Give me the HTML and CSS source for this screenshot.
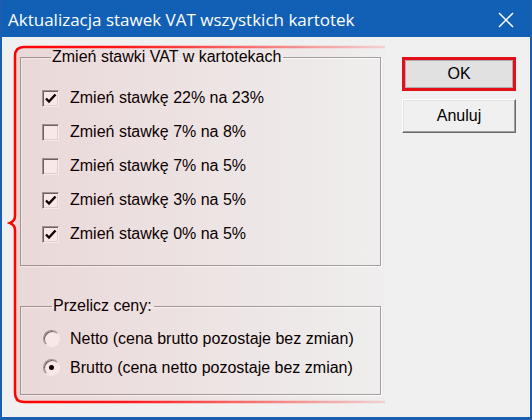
FILE: index.html
```html
<!DOCTYPE html>
<html>
<head>
<meta charset="utf-8">
<link rel="stylesheet" href="styles.css">
</head>
<body>
<div class="window">
  <div class="titlebar">
    <span class="title">Aktualizacja stawek VAT wszystkich kartotek</span>
    <svg class="close" width="16" height="16" viewBox="0 0 16 16"><path d="M1 1 L15 15 M15 1 L1 15" stroke="#fff" stroke-width="1.5" fill="none"/></svg>
  </div>
  <div class="content">
    <div class="left">
      <fieldset class="group g1">
        <legend>Zmień stawki VAT w kartotekach</legend>
        <div class="row"><span class="check on"><svg viewBox="0 0 15 15" width="15" height="15"><path d="M3 7.5 L6 10.5 L12.5 3.5" stroke="#000" stroke-width="2.4" fill="none"/></svg></span><span>Zmień stawkę 22% na 23%</span></div>
        <div class="row"><span class="check"></span><span>Zmień stawkę 7% na 8%</span></div>
        <div class="row"><span class="check"></span><span>Zmień stawkę 7% na 5%</span></div>
        <div class="row"><span class="check on"><svg viewBox="0 0 15 15" width="15" height="15"><path d="M3 7.5 L6 10.5 L12.5 3.5" stroke="#000" stroke-width="2.4" fill="none"/></svg></span><span>Zmień stawkę 3% na 5%</span></div>
        <div class="row"><span class="check on"><svg viewBox="0 0 15 15" width="15" height="15"><path d="M3 7.5 L6 10.5 L12.5 3.5" stroke="#000" stroke-width="2.4" fill="none"/></svg></span><span>Zmień stawkę 0% na 5%</span></div>
      </fieldset>
      <fieldset class="group g2">
        <legend>Przelicz ceny:</legend>
        <div class="rrow"><span class="radio"></span><span>Netto (cena brutto pozostaje bez zmian)</span></div>
        <div class="rrow"><span class="radio on"></span><span>Brutto (cena netto pozostaje bez zmian)</span></div>
      </fieldset>
    </div>
    <div class="right">
      <div class="btn ok"><span>OK</span></div>
      <div class="btn cancel"><span>Anuluj</span></div>
    </div>
  </div>
  <svg class="annot" width="532" height="420" viewBox="0 0 532 420">
    <defs>
      <linearGradient id="fade" gradientUnits="userSpaceOnUse" x1="10" y1="0" x2="385" y2="0">
        <stop offset="0" stop-color="#ff0000" stop-opacity="1"/>
        <stop offset="0.3" stop-color="#ff0000" stop-opacity="0.9"/>
        <stop offset="1" stop-color="#ff0000" stop-opacity="0.12"/>
      </linearGradient>
      <linearGradient id="tint" gradientUnits="userSpaceOnUse" x1="15" y1="0" x2="385" y2="0">
        <stop offset="0" stop-color="#b40000" stop-opacity="0.1"/>
        <stop offset="1" stop-color="#b40000" stop-opacity="0.01"/>
      </linearGradient>
    </defs>
    <path d="M385 47 H24 Q15 47 15 56 V402 H385 Z" fill="url(#tint)"/>
    <path d="M385 47 H24 Q15 47 15 56 V216 Q15 221 10 223 Q15 225 15 230 V393 Q15 402 24 402 H385" stroke="url(#fade)" stroke-width="2.5" fill="none"/>
  </svg>
</div>
</body>
</html>
```
FILE: styles.css
```css
html, body {
  margin: 0;
  padding: 0;
  background: #f0f0f0;
}
.window {
  position: relative;
  width: 532px;
  height: 420px;
  box-sizing: border-box;
  border: 2px solid #1a5fb2;
  border-top: 0;
  border-bottom-width: 3px;
  background: #f0f0f0;
  font-family: "Liberation Sans", Arial, sans-serif;
  font-size: 16px;
  color: #000;
  overflow: hidden;
}
.titlebar {
  height: 37px;
  margin: 0 -2px;
  background: #1160b6;
  display: flex;
  align-items: center;
  justify-content: space-between;
  padding: 2px 18px 0 8px;
  box-sizing: border-box;
  color: #fff;
  font-family: "Open Sans", "Liberation Sans", sans-serif;
  font-size: 17px;
}
.title {
  letter-spacing: 0;
}
.close {
  display: block;
}
.content {
  display: flex;
  padding: 11px 0 0 18px;
}
.left {
  display: flex;
  flex-direction: column;
  width: 361px;
}
.group {
  margin: 0;
  padding: 0;
  min-width: 0;
  border: 1px solid #a0a0a0;
  box-shadow: inset 1px 1px #fff, 1px 1px #fff;
}
.group legend {
  margin-left: 9px;
  padding: 0 2px 0 1px;
  line-height: 18px;
  height: 18px;
}
.g1 {
  padding: 15px 0 14px 21px;
}
.g2 {
  margin-top: 31px;
  padding: 9px 0 12px 22px;
}
.row {
  display: flex;
  align-items: center;
  height: 34px;
  gap: 11px;
}
.rrow {
  display: flex;
  align-items: center;
  height: 29px;
  gap: 10px;
}
.check {
  width: 17px;
  height: 17px;
  box-sizing: border-box;
  border: 1px solid;
  border-color: #a0a0a0 #fff #fff #a0a0a0;
  box-shadow: inset 1px 1px #696969, inset -1px -1px #e3e3e3;
  background: #fff;
  display: flex;
  align-items: center;
  justify-content: center;
}
.check svg {
  display: block;
}
.radio {
  position: relative;
  width: 17px;
  height: 17px;
  box-sizing: border-box;
  border-radius: 50%;
  border: 1px solid;
  border-color: #a0a0a0 #fff #fff #a0a0a0;
  box-shadow: inset 1px 1px #696969;
  background: #fff;
  display: flex;
  align-items: center;
  justify-content: center;
}
.radio.on::after {
  content: "";
  width: 5px;
  height: 5px;
  border-radius: 50%;
  background: #000;
}
.right {
  display: flex;
  flex-direction: column;
  margin-left: 21px;
  padding-top: 9px;
  gap: 8px;
}
.btn {
  width: 114px;
  height: 34px;
  box-sizing: border-box;
  display: flex;
  align-items: center;
  justify-content: center;
}
.ok {
  border: 3px solid #e40f18;
  background: #e1e1e1;
  box-shadow: inset 0 0 0 1px #adadad;
}
.cancel {
  border: 1px solid;
  border-color: #fff #696969 #696969 #fff;
  box-shadow: inset -1px -1px #a0a0a0, inset 1px 1px #e3e3e3;
  background: #f0f0f0;
}
.annot {
  position: absolute;
  left: -2px;
  top: 0;
  pointer-events: none;
}
```
